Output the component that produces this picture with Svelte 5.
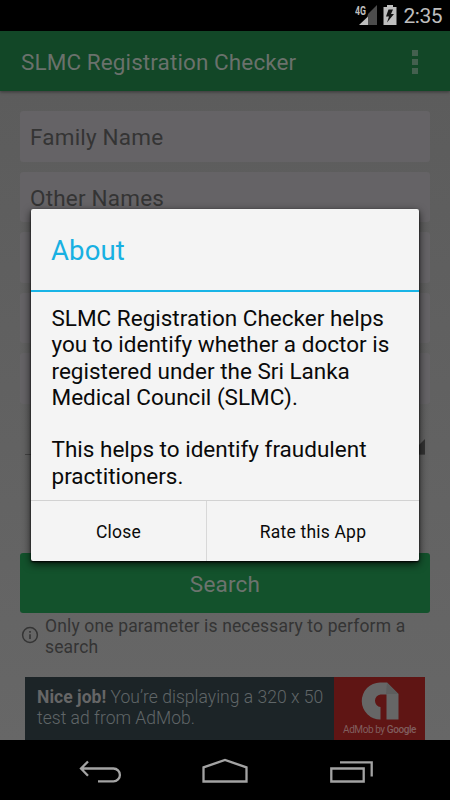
<script>
  let fields = ['Family Name', 'Other Names', '', '', ''];
  let message = [
    'SLMC Registration Checker helps',
    'you to identify whether a doctor is',
    'registered under the Sri Lanka',
    'Medical Council (SLMC).',
    '',
    'This helps to identify fraudulent',
    'practitioners.',
  ];
</script>

<div class="screen">
  <div class="status">
    <svg width="23" height="23" viewBox="0 0 23 23">
      <text x="0" y="10" class="network" textLength="11" lengthAdjust="spacingAndGlyphs">4G</text>
      <path d="M22 0V20H12.500V11L13 9Z" fill="#4c4c4c" />
      <path d="M4 20L13 11.500V20Z" fill="#bebebe" />
    </svg>
    <svg class="battery" width="14" height="21" viewBox="0 0 14 21">
      <path d="M0.500 2H4V0H10V2H13.500V20H0.500Z" fill="#bebebe" />
      <path d="M5.500 4.500H10L8 9H11L4 17.500L6 11.500H3Z" fill="#111" />
    </svg>
    <span class="clock">2:35</span>
  </div>

  <header>
    <h1>SLMC Registration Checker</h1>
    <div class="menu"><i></i><i></i><i></i></div>
  </header>

  <main>
    {#each fields as field}
      <div class="field">{field}</div>
    {/each}
    <div class="spinner">
      <svg width="15" height="15" viewBox="0 0 15 15"><path d="M15 0V15H0Z" fill="#333" /></svg>
    </div>
    <button class="search">Search</button>
    <div class="hint">
      <svg width="18" height="18" viewBox="0 0 18 18">
        <circle cx="9" cy="9" r="7.400" fill="none" stroke="#343434" stroke-width="1.500" />
        <path d="M9 8.200V13M9 5V6.700" stroke="#343434" stroke-width="1.600" />
      </svg>
      <p>Only one parameter is necessary to perform a<br />search</p>
    </div>
    <div class="ad">
      <p><b>Nice job!</b> You’re displaying a 320 x 50<br />test ad from AdMob.</p>
      <div class="admob">
        <svg width="38" height="39" viewBox="0 0 38 39">
          <path d="M19 0.500H26L37.500 12V37.500H25.500V12.500H19.500A6.300 6.300 0 0 0 19.500 25V37.500A18.500 18.500 0 0 1 19 0.500Z" fill="#666" />
          <path d="M26 0.500L37.500 12H25Z" fill="#5d5d5d" />
        </svg>
        <span>AdMob by <b>Google</b></span>
      </div>
    </div>
  </main>

  <nav>
    <svg width="330" height="60" viewBox="0 0 330 60" fill="none" stroke="#a3a3a3" stroke-width="2.300">
      <path d="M21 28.500H53.500A6.400 6.400 0 0 1 53.500 41.300H38M28 21.500L21 28.500L28 35.800" />
      <path d="M143.500 41.500V27.300L165 20L186.500 27.300V41.500Z" />
      <path d="M271.300 28.500H303.700V41.500H271.300ZM280 22.300H311.700V36.500" />
    </svg>
  </nav>

  <div class="dialog">
    <h2>About</h2>
    <div class="message">
      {#each message as line}
        <p>{line}</p>
      {/each}
    </div>
    <div class="actions">
      <button>Close</button>
      <button>Rate this App</button>
    </div>
  </div>
</div>

<style>
  :global(body) {
    background: #000;
  }

  .screen {
    position: relative;
    display: flex;
    flex-direction: column;
    width: 450px;
    height: 800px;
    overflow: hidden;
    font-family: Roboto, sans-serif;
    font-size: 22.5px;
    background: #000;
  }

  h1, h2, p {
    margin: 0;
    font-weight: 400;
    white-space: nowrap;
  }

  button {
    border: 0;
    padding: 0;
    font-family: inherit;
    background: none;
  }

  .status {
    display: flex;
    height: 31px;
    flex: none;
    justify-content: flex-end;
    align-items: flex-start;
    box-sizing: border-box;
    padding: 5px 8px 0 0;
    color: #bebebe;
  }

  .network {
    font-size: 12px;
    font-weight: 700;
    fill: #bebebe;
  }

  .battery {
    margin: 0 7px 0 5px;
  }

  .clock {
    font-size: 21px;
    line-height: 23px;
    letter-spacing: -0.5px;
  }

  header {
    position: relative;
    display: flex;
    flex: none;
    height: 60px;
    align-items: center;
    justify-content: space-between;
    box-sizing: border-box;
    padding: 2px 32px 0 21px;
    color: #6a716c;
    background: #124727;
    box-shadow: 0 1px 3px rgba(0, 0, 0, 0.4);
  }

  h1 {
    font-size: 22.5px;
    letter-spacing: 0.1px;
  }

  .menu {
    display: grid;
    gap: 3px;
  }

  .menu i {
    width: 6px;
    height: 6.3px;
    background: #44604f;
  }

  main {
    display: flex;
    flex: none;
    flex-direction: column;
    height: 649px;
    box-sizing: border-box;
    padding: 20px 20px 0;
    background: linear-gradient(#5c5c5c, #676767);
  }

  .field {
    flex: none;
    height: 50.6px;
    box-sizing: border-box;
    margin-bottom: 10px;
    padding: 1px 0 0 10px;
    border-radius: 3px;
    line-height: 50px;
    letter-spacing: 0.2px;
    color: #343434;
    background: #656366;
  }

  .spinner {
    display: flex;
    flex: none;
    height: 41px;
    margin: 0 5px;
    border-bottom: 1px solid #444;
    box-sizing: border-box;
    justify-content: flex-end;
    align-items: flex-end;
  }

  .search {
    flex: none;
    height: 60px;
    margin-top: 98px;
    padding-top: 2px;
    border-radius: 3px;
    font-size: 22.5px;
    letter-spacing: 0.2px;
    color: #6c736e;
    background: #13522c;
  }

  .hint {
    display: flex;
    flex: none;
    height: 64.5px;
    box-sizing: border-box;
    padding: 3px 0 0 1px;
    gap: 6px;
    font-size: 17.5px;
    line-height: 20.6px;
    letter-spacing: 0.15px;
    color: #343434;
  }

  .hint svg {
    margin-top: 10px;
  }

  .ad {
    display: flex;
    flex: none;
    height: 62.5px;
    margin: 0 5px;
    color: #606668;
    background: #1c2427;
    font-size: 17.5px;
    line-height: 20.6px;
  }

  .ad p {
    width: 309px;
    box-sizing: border-box;
    padding: 10px 0 0 12px;
    font-weight: 300;
    letter-spacing: 0.03px;
  }

  .ad p b {
    font-weight: 700;
    color: #666;
  }

  .admob {
    display: flex;
    width: 91px;
    flex-direction: column;
    align-items: center;
    padding-top: 5px;
    box-sizing: border-box;
    background: #5f1514;
  }

  .admob span {
    font-size: 10px;
    line-height: 17px;
    letter-spacing: -0.42px;
    white-space: nowrap;
    color: #805e5e;
  }

  .admob b {
    font-weight: 500;
  }

  nav {
    display: flex;
    height: 60px;
    justify-content: center;
  }

  .dialog {
    position: absolute;
    left: 31px;
    top: 209px;
    display: flex;
    flex-direction: column;
    width: 388px;
    height: 352px;
    border-radius: 2px;
    color: #0a0a0a;
    background: #f4f4f4;
    box-shadow: 0 1px 2px #000, 0 3px 9px rgba(0, 0, 0, 0.75);
  }

  h2 {
    height: 83px;
    box-sizing: border-box;
    padding-left: 20px;
    border-bottom: 2.500px solid #18b4e6;
    font-size: 27.5px;
    line-height: 83px;
    letter-spacing: 0.15px;
    color: #18b0e2;
  }

  .message {
    height: 208px;
    box-sizing: border-box;
    padding: 13px 0 0 20.5px;
  }

  .message p {
    height: 26.3px;
    line-height: 26.3px;
  }

  .actions {
    display: grid;
    flex: 1;
    grid-template-columns: 175px 1fr;
    border-top: 1px solid #d2d2d2;
  }

  .actions button {
    padding-top: 1px;
    font-size: 17.5px;
    letter-spacing: 0.2px;
    color: #0a0a0a;
  }

  .actions button + button {
    border-left: 1px solid #d8d8d8;
  }
</style>
